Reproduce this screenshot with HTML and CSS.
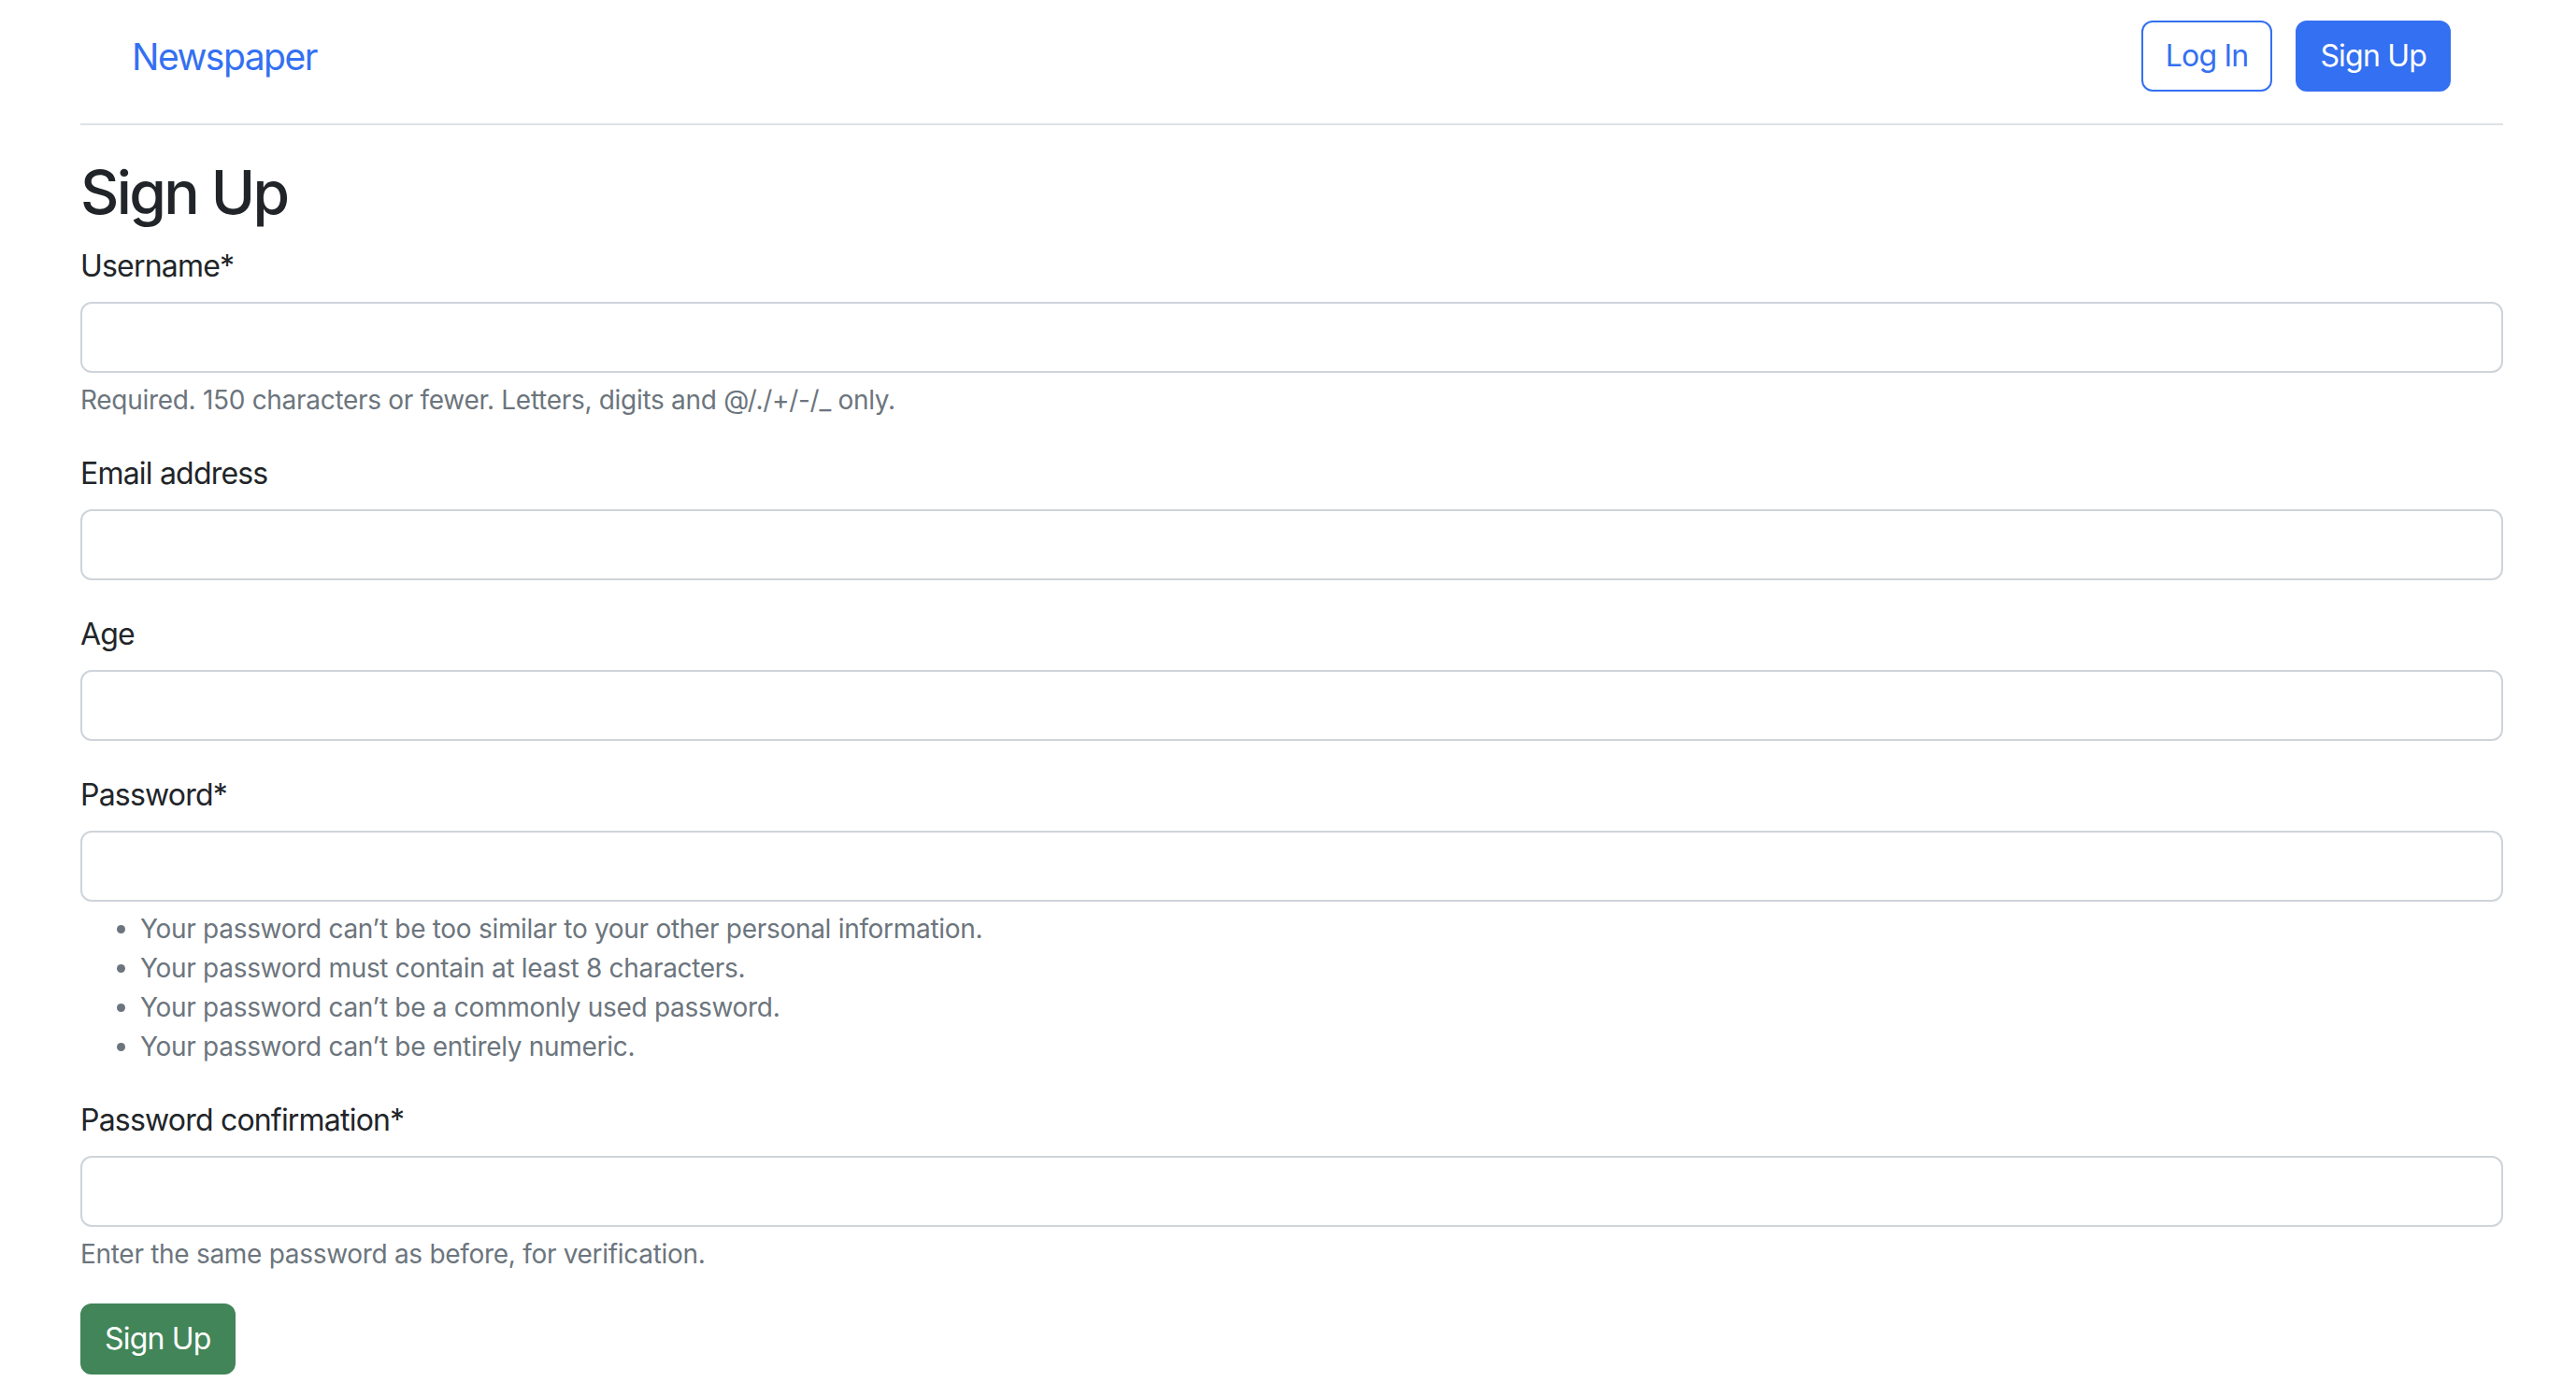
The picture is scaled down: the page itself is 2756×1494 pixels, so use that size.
FILE: index.html
```html
<!DOCTYPE html>
<html lang="en">
<head>
    <meta charset="UTF-8">
    <meta name="viewport" content="width=device-width, initial-scale=1.0">
    <title>Sign Up - Newspaper</title>
    <link rel="stylesheet" href="styles.css">
</head>
<body>

    <div class="container">
        <header class="site-header">
            <a class="brand" href="#">Newspaper</a>
            <div class="auth-links">
                <a class="btn btn-outline" href="#">Log In</a>
                <a class="btn btn-primary" href="#">Sign Up</a>
            </div>
        </header>

        <main>
            <h2 class="page-title">Sign Up</h2>

            <form class="signup-form">
                <div class="field">
                    <label for="id_username">Username*</label>
                    <input type="text" id="id_username" class="input" />
                    <div class="help">Required. 150 characters or fewer. Letters, digits and @/./+/-/_ only.</div>
                </div>

                <div class="field">
                    <label for="id_email">Email address</label>
                    <input type="email" id="id_email" class="input" />
                </div>

                <div class="field">
                    <label for="id_age">Age</label>
                    <input type="number" id="id_age" class="input" />
                </div>

                <div class="field">
                    <label for="id_password1">Password*</label>
                    <input type="password" id="id_password1" class="input" />
                    <ul class="help help-list">
                        <li>Your password can’t be too similar to your other personal information.</li>
                        <li>Your password must contain at least 8 characters.</li>
                        <li>Your password can’t be a commonly used password.</li>
                        <li>Your password can’t be entirely numeric.</li>
                    </ul>
                </div>

                <div class="field">
                    <label for="id_password2">Password confirmation*</label>
                    <input type="password" id="id_password2" class="input" />
                    <div class="help">Enter the same password as before, for verification.</div>
                </div>

                <button type="submit" class="btn btn-success">Sign Up</button>
            </form>
        </main>
    </div>

</body>
</html>
```

FILE: styles.css
```css
body {
    margin: 0;
    background-color: #ffffff;
    color: #212529;
    font-family: Inter, 'Noto Sans', sans-serif;
    font-size: 32px;
    line-height: 1.5;
    letter-spacing: -0.8px;
}

.container {
    padding: 0 78px 0 86px;
}

.site-header {
    display: flex;
    align-items: center;
    justify-content: space-between;
    padding: 22px 56px 34px 55px;
    border-bottom: 2px solid #dee2e6;
    margin-bottom: 32px;
}

.brand {
    padding-top: 3px;
    font-size: 39px;
    letter-spacing: -1.5px;
    color: #3470f2;
    text-decoration: none;
}

.auth-links {
    display: flex;
    gap: 25px;
}

.btn {
    display: inline-block;
    box-sizing: border-box;
    height: 76px;
    padding: 12px 24px;
    border: 2px solid transparent;
    border-radius: 12px;
    font-family: inherit;
    font-size: 32px;
    letter-spacing: -0.8px;
    line-height: 48px;
    text-decoration: none;
    cursor: pointer;
}

.btn-outline {
    color: #3470f2;
    border-color: #3470f2;
    background-color: #ffffff;
}

.btn-primary {
    color: #ffffff;
    background-color: #3470f2;
    border-color: #3470f2;
}

.btn-success {
    color: #ffffff;
    background-color: #418558;
    border-color: #418558;
}

.page-title {
    margin: 0 0 14px;
    padding-top: 2px;
    font-size: 64px;
    font-weight: 500;
    letter-spacing: -2.6px;
    line-height: 1.2;
}

.field {
    margin-bottom: 32px;
}

.field label {
    display: block;
    padding-top: 2px;
    margin-bottom: 14px;
}

.input {
    display: block;
    box-sizing: border-box;
    width: 100%;
    height: 76px;
    padding: 12px 24px;
    border: 2px solid #ced4da;
    border-radius: 12px;
    font-family: inherit;
    font-size: 32px;
    background-color: #ffffff;
}

.help {
    margin-top: 8px;
    font-size: 28px;
    line-height: 42px;
    letter-spacing: -0.3px;
    color: #6c757d;
}

.help-list {
    margin-bottom: 0;
    padding-left: 64px;
}
```
